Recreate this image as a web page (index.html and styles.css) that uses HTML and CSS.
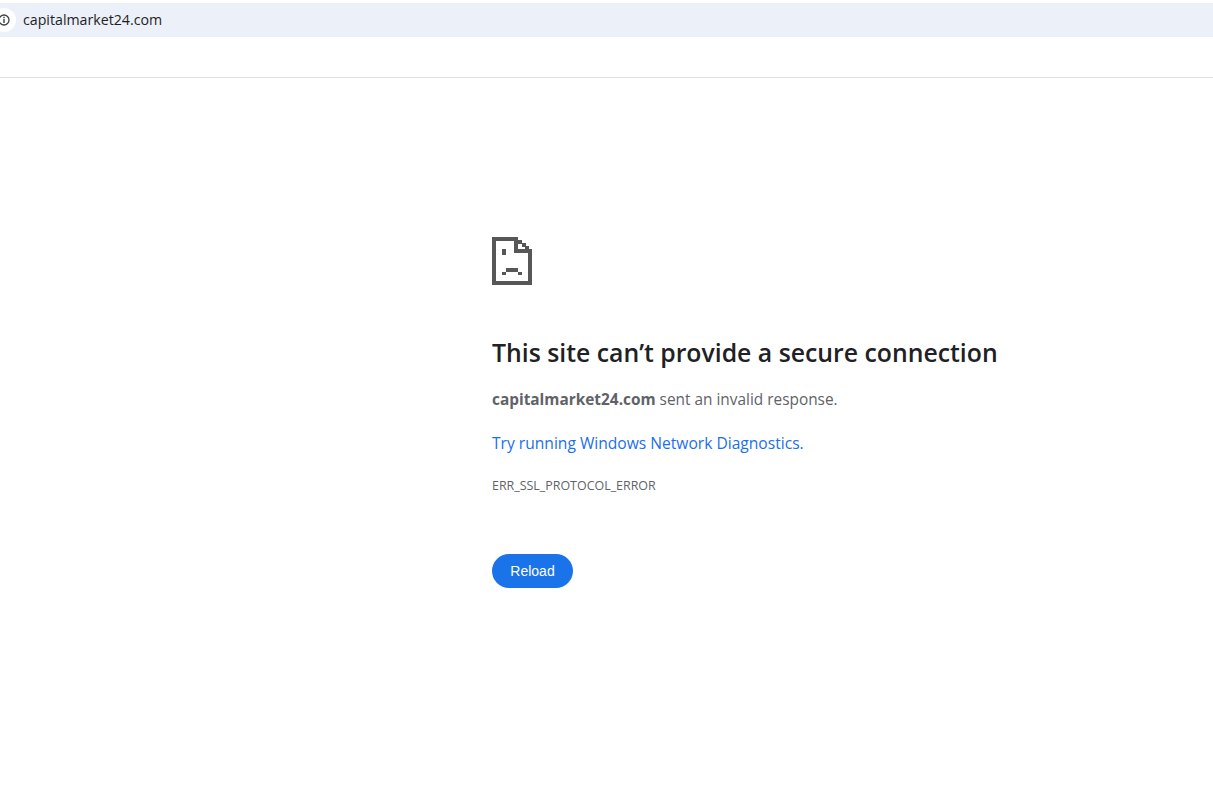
FILE: index.html
```html
<!DOCTYPE html>
<html lang="en">
<head>
<meta charset="UTF-8">
<meta name="viewport" content="width=device-width, initial-scale=1.0">
<title>capitalmarket24.com</title>
<link rel="stylesheet" href="styles.css">
</head>
<body>

<header class="toolbar">
    <div class="address-bar">
        <span class="site-info">
            <svg width="12" height="12" viewBox="0 0 12 12" fill="none" stroke="#3c4043">
                <circle cx="6" cy="6" r="5" stroke-width="1.3"/>
                <path d="M6 5V9M6 2.8V4.2" stroke-width="1.4"/>
            </svg>
        </span>
        <span class="url">capitalmarket24.com</span>
    </div>
</header>

<main class="error-page">
    <svg class="sad-file" width="40" height="48" viewBox="0 0 40 48" fill="#575757" shape-rendering="crispEdges">
        <rect x="0" y="0" width="26" height="4"/>
        <rect x="0" y="0" width="4" height="48"/>
        <rect x="0" y="44" width="40" height="4"/>
        <rect x="36" y="12" width="4" height="36"/>
        <rect x="22" y="0" width="4" height="16"/>
        <rect x="22" y="12" width="18" height="4"/>
        <rect x="26" y="3" width="4" height="4"/>
        <rect x="30" y="6" width="4" height="4"/>
        <rect x="33" y="9" width="4" height="4"/>
        <rect x="10" y="12" width="4" height="6"/>
        <rect x="14" y="31" width="12" height="4"/>
        <rect x="10" y="35" width="4" height="3"/>
        <rect x="26" y="35" width="4" height="3"/>
    </svg>
    <h1>This site can’t provide a secure connection</h1>
    <p class="summary"><strong>capitalmarket24.com</strong> sent an invalid response.</p>
    <p class="suggestion"><a href="#">Try running Windows Network Diagnostics</a>.</p>
    <div class="error-code">ERR_SSL_PROTOCOL_ERROR</div>
    <button type="button" class="reload">Reload</button>
</main>

</body>
</html>
```

FILE: styles.css
```css
body {
    font-family: "Open Sans", "Noto Sans", sans-serif;
    background-color: #fff;
    margin: 0;
    padding: 0;
    min-height: 785px;
    overflow: hidden;
}
.toolbar {
    height: 78px;
    padding-top: 3px;
    box-sizing: border-box;
    border-bottom: 1px solid #e0e0e0;
}
.address-bar {
    display: flex;
    align-items: center;
    height: 34px;
    background-color: #ebf0f9;
    overflow: hidden;
}
.site-info {
    flex: none;
    display: flex;
    align-items: center;
    justify-content: center;
    width: 24px;
    height: 24px;
    margin-left: -8px;
    border-radius: 50%;
    background-color: #fff;
}
.url {
    margin-left: 7px;
    margin-bottom: 2px;
    font-size: 14.2px;
    color: #1f1f1f;
}
.error-page {
    margin-left: 492px;
    padding-top: 159px;
    width: 600px;
}
.sad-file {
    display: block;
}
h1 {
    margin: 51px 0 0;
    font-size: 24.8px;
    font-weight: 600;
    line-height: 32px;
    color: #202124;
}
.summary, .suggestion {
    margin: 0;
    line-height: 24px;
    color: #5f6368;
}
.summary {
    margin-top: 20px;
    font-size: 15.4px;
}
.summary strong {
    font-weight: 700;
}
.suggestion {
    margin-top: 19px;
    font-size: 15.6px;
    color: #1a6ef0;
}
.suggestion a {
    color: #1a6ef0;
    text-decoration: none;
}
.error-code {
    margin-top: 23px;
    font-size: 12.45px;
    line-height: 16px;
    color: #5f6368;
}
.reload {
    display: block;
    margin-top: 60px;
    width: 81px;
    height: 34px;
    padding: 0;
    border: none;
    border-radius: 17px;
    background-color: #1a73e8;
    color: #fff;
    font-family: "Liberation Sans", Arial, sans-serif;
    font-size: 14px;
    cursor: pointer;
}
```
